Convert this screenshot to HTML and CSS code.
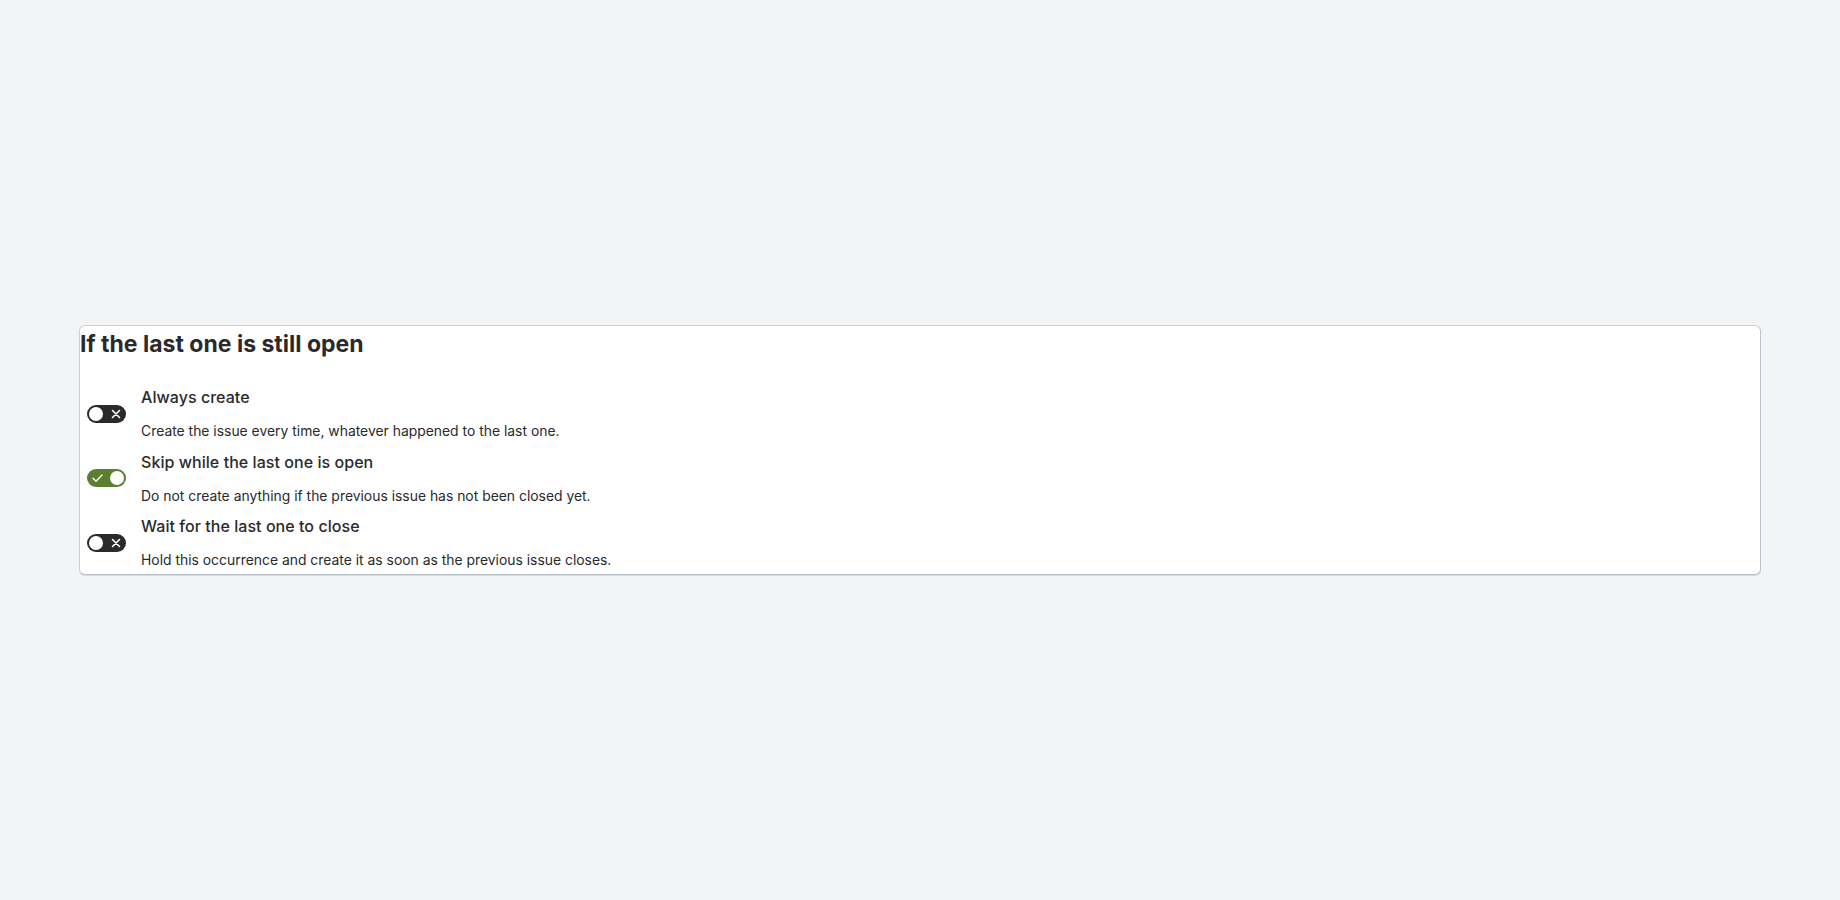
FILE: index.html
```html
<!DOCTYPE html>
<html lang="en">
<head>
<meta charset="utf-8">
<title>If the last one is still open</title>
<link rel="stylesheet" href="styles.css">
</head>
<body>
<main class="page">
  <section class="card">
    <h2 class="card-title">If the last one is still open</h2>
    <ul class="options">
      <li class="option">
        <span class="toggle toggle-off" role="switch" aria-checked="false">
          <span class="knob"></span>
          <svg class="mark" viewBox="0 0 10 10" width="10" height="10"><path d="M1.5 1.5 L8.5 8.5 M8.5 1.5 L1.5 8.5" stroke="#fff" stroke-width="1.6" stroke-linecap="round" fill="none"/></svg>
        </span>
        <div class="option-text">
          <div class="option-label">Always create</div>
          <div class="option-desc">Create the issue every time, whatever happened to the last one.</div>
        </div>
      </li>
      <li class="option">
        <span class="toggle toggle-on" role="switch" aria-checked="true">
          <svg class="mark" viewBox="0 0 11 10" width="11" height="10"><path d="M1 5.3 L4 8.2 L10 2" stroke="#fff" stroke-width="1.4" stroke-linecap="round" stroke-linejoin="round" fill="none"/></svg>
          <span class="knob"></span>
        </span>
        <div class="option-text">
          <div class="option-label">Skip while the last one is open</div>
          <div class="option-desc">Do not create anything if the previous issue has not been closed yet.</div>
        </div>
      </li>
      <li class="option">
        <span class="toggle toggle-off" role="switch" aria-checked="false">
          <span class="knob"></span>
          <svg class="mark" viewBox="0 0 10 10" width="10" height="10"><path d="M1.5 1.5 L8.5 8.5 M8.5 1.5 L1.5 8.5" stroke="#fff" stroke-width="1.6" stroke-linecap="round" fill="none"/></svg>
        </span>
        <div class="option-text">
          <div class="option-label">Wait for the last one to close</div>
          <div class="option-desc">Hold this occurrence and create it as soon as the previous issue closes.</div>
        </div>
      </li>
    </ul>
  </section>
</main>
</body>
</html>
```
FILE: styles.css
```css
html, body {
  margin: 0;
  padding: 0;
  height: 100%;
}
body {
  background: #f3f4f6;
  font-family: Inter, "Noto Sans", "Liberation Sans", sans-serif;
  color: #2a2a2c;
}
.page {
  height: 100%;
  display: flex;
  align-items: center;
  justify-content: center;
  padding: 0 79px 0 79px;
  box-sizing: border-box;
}
.card {
  flex: 1;
  background: #fff;
  border: 1px solid #c9d0d8;
  border-bottom-color: #b9c1cb;
  border-right-color: #bcc4cd;
  border-radius: 6px;
  box-shadow: 0 1px 1px rgba(120, 135, 155, 0.25);
  padding: 4px 0 5px 0;
}
.card-title {
  margin: 0 0 29px 0;
  font-size: 23px;
  line-height: 28px;
  font-weight: 700;
  color: #2a2a2c;
}
.options {
  list-style: none;
  margin: 0;
  padding: 0;
  display: flex;
  flex-direction: column;
  gap: 11.5px;
}
.option {
  display: flex;
  align-items: center;
  gap: 15px;
  padding-left: 7px;
}
.toggle {
  width: 39px;
  height: 18px;
  border-radius: 9px;
  display: flex;
  align-items: center;
  justify-content: space-between;
  box-sizing: border-box;
  padding: 0 5px 0 2px;
  flex: none;
}
.toggle-off { background: #2a2a2c; }
.toggle-on { background: #5b7f2e; padding: 0 2px 0 5px; }
.knob {
  width: 14px;
  height: 14px;
  border-radius: 50%;
  background: #fff;
}
.mark { display: block; }
.option-text {
  display: flex;
  flex-direction: column;
  gap: 15px;
}
.option-label {
  font-size: 16px;
  line-height: 20px;
  font-weight: 500;
  letter-spacing: 0.05px;
}
.option-desc {
  font-size: 13.9px;
  line-height: 18px;
  font-weight: 400;
}
```
